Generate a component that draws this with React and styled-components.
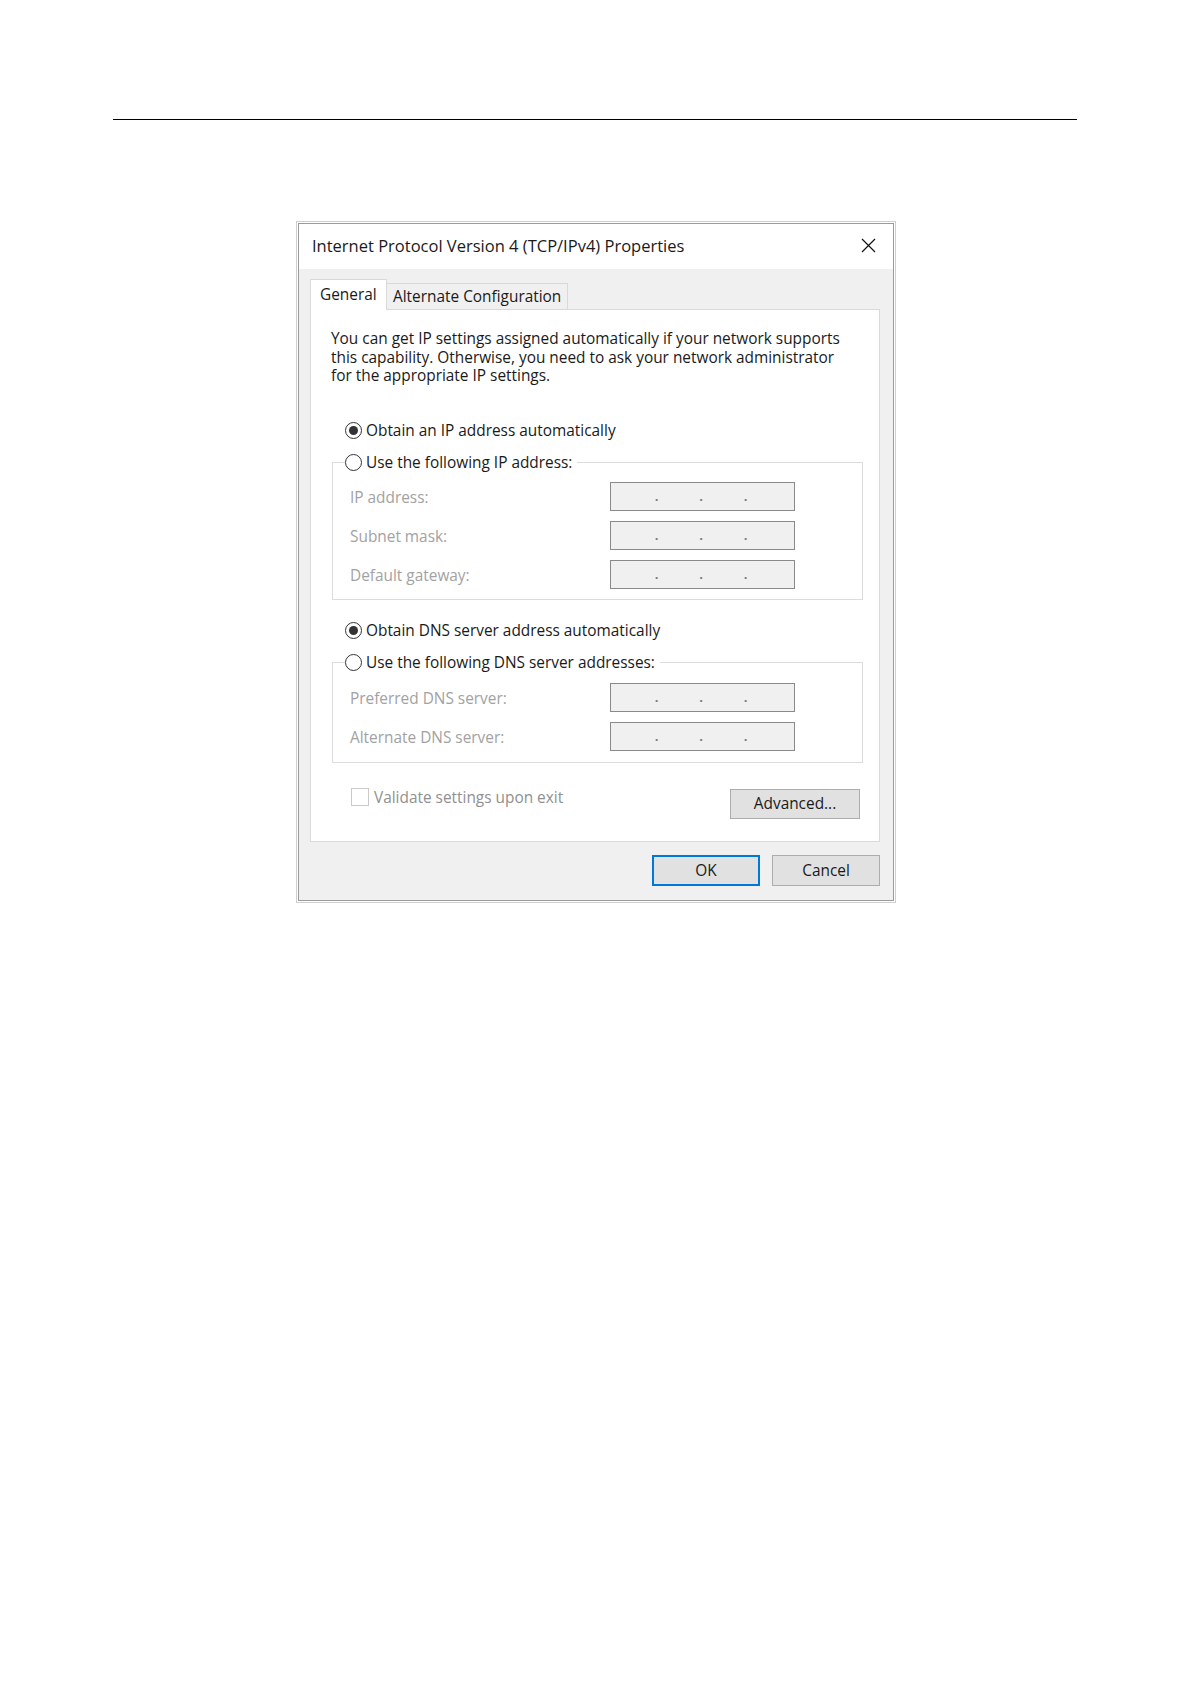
import React from "react";
import styled, { createGlobalStyle } from "styled-components";

const Global = createGlobalStyle`
    body {
        margin: 0;
        background: #fff;
        font-family: "Open Sans", "Noto Sans", sans-serif;
        font-size: 15.4px;
        color: #111;
    }
`

const Page = styled.div`
    width: 1191px;
    height: 1684px;
    padding: 119px 0 0 113px;
    box-sizing: border-box;
`

const Rule = styled.div`
    width: 964px;
    border-top: 1px solid #000;
`

const Frame = styled.div`
    margin: 101px 0 0 183px;
    width: 600px;
    height: 682px;
    box-sizing: border-box;
    border: 1px solid #cfcfcf;
    padding: 1px;
    background: #fff;
`

const Window = styled.div`
    height: 100%;
    box-sizing: border-box;
    border: 1px solid #9a9a9a;
    display: flex;
    flex-direction: column;
`

const TitleBar = styled.div`
    height: 45px;
    flex: none;
    display: flex;
    align-items: center;
    justify-content: space-between;
    padding: 0 17px 2px 13px;
    box-sizing: border-box;
    background: #fff;
    font-size: 16.5px;
    color: #1a1a1a;
`

const Close = styled.div`
    width: 15px;
    height: 15px;
    display: flex;
`

const Body = styled.div`
    flex: 1;
    background: #f0f0f0;
    padding: 10px 13px 0 11px;
    display: flex;
    flex-direction: column;
`

const TabStrip = styled.div`
    display: flex;
    align-items: flex-end;
    height: 31px;
    margin-bottom: -1px;
`

const Tab = styled.div`
    position: relative;
    z-index: ${(p) => (p.active ? 2 : 1)};
    height: ${(p) => (p.active ? "31px" : "27px")};
    box-sizing: border-box;
    border: 1px solid #d9d9d9;
    border-bottom: ${(p) => (p.active ? "none" : "1px solid #d9d9d9")};
    border-left: ${(p) => (p.active ? "1px solid #d9d9d9" : "none")};
    background: ${(p) => (p.active ? "#fff" : "#f0f0f0")};
    padding: ${(p) => (p.active ? "0 6px 2px 9px" : "0 4px 0 6px")};
    display: flex;
    align-items: center;
    white-space: nowrap;
    color: #1a1a1a;
    width: ${(p) => p.w}px;
`

const Panel = styled.div`
    height: 533px;
    box-sizing: border-box;
    border: 1px solid #d9d9d9;
    background: #fff;
    padding: 20px 16px 0 0;
    display: flex;
    flex-direction: column;
`

const Intro = styled.p`
    margin: 0 0 0 20px;
    line-height: 18.5px;
    color: #1a1a1a;
    white-space: nowrap;
`

const RadioRow = styled.label`
    display: flex;
    align-items: center;
    gap: 4px;
    height: 20px;
    margin: ${(p) => p.m || "0"};
    color: #1a1a1a;
    white-space: nowrap;
`

const Radio = styled.span`
    width: 17px;
    height: 17px;
    box-sizing: border-box;
    border: 1px solid #333;
    border-radius: 50%;
    display: flex;
    align-items: center;
    justify-content: center;
    flex: none;
    background: #fff;
    &::after {
        content: "";
        width: 9px;
        height: 9px;
        border-radius: 50%;
        background: #333;
        display: ${(p) => (p.checked ? "block" : "none")};
    }
`

const Group = styled.fieldset`
    margin: ${(p) => p.m};
    border: 1px solid #dcdcdc;
    padding: 0 0 ${(p) => p.pb}px 17px;
    display: flex;
    flex-direction: column;
    gap: 10px;
    min-width: 0;
`

const Legend = styled.legend`
    margin-left: -5px;
    padding: 0 5px 0 0;
`

const FieldRow = styled.div`
    display: flex;
    align-items: center;
    height: 29px;
    &:first-of-type {
        margin-top: ${(p) => p.first || 0}px;
    }
`

const FieldLabel = styled.span`
    width: 260px;
    color: #a2a2a2;
    padding-top: 3px;
`

const IpBox = styled.div`
    width: 185px;
    height: 29px;
    box-sizing: border-box;
    border: 1px solid #8a8a8a;
    background: #f0f0f0;
    display: flex;
    padding-left: 3px;
`

const Dot = styled.span`
    width: 44.5px;
    text-align: right;
    font-size: 13px;
    font-weight: 700;
    line-height: 26px;
    color: #7a7a7a;
`

const Footer = styled.div`
    display: flex;
    justify-content: space-between;
    align-items: flex-start;
    margin: 26px 3px 0 40px;
`

const Check = styled.label`
    display: flex;
    align-items: center;
    gap: 5px;
    color: #909090;
    margin-top: -2px;
`

const Box = styled.span`
    width: 18px;
    height: 18px;
    box-sizing: border-box;
    border: 1px solid #cacaca;
    background: #fff;
`

const Button = styled.button`
    width: ${(p) => p.w}px;
    height: ${(p) => p.h}px;
    box-sizing: border-box;
    background: #e1e1e1;
    border: ${(p) => (p.primary ? "2px solid #0078d7" : "1px solid #adadad")};
    font-family: "Open Sans", "Noto Sans", sans-serif;
    font-size: 15.4px;
    color: #1a1a1a;
    padding: 0;
`

const Actions = styled.div`
    display: flex;
    justify-content: flex-end;
    gap: 12px;
    margin-top: 13px;
`

const IpField = () => (
    <IpBox>
        <Dot>.</Dot>
        <Dot>.</Dot>
        <Dot>.</Dot>
    </IpBox>
)

const Field = ({ label, first }) => (
    <FieldRow first={first}>
        <FieldLabel>{label}</FieldLabel>
        <IpField />
    </FieldRow>
)

const App = () => {
    return (
        <>
            <Global />
            <Page>
                <Rule />
                <Frame>
                    <Window>
                        <TitleBar>
                            <span>Internet Protocol Version 4 (TCP/IPv4) Properties</span>
                            <Close>
                                <svg width="15" height="15" viewBox="0 0 15 15">
                                    <path d="M1 1 L14 14 M14 1 L1 14" stroke="#111" strokeWidth="1.2" fill="none" />
                                </svg>
                            </Close>
                        </TitleBar>
                        <Body>
                            <TabStrip>
                                <Tab active w={77}>General</Tab>
                                <Tab w={181}>Alternate Configuration</Tab>
                            </TabStrip>
                            <Panel>
                                <Intro>
                                    You can get IP settings assigned automatically if your network supports<br />
                                    this capability. Otherwise, you need to ask your network administrator<br />
                                    for the appropriate IP settings.
                                </Intro>
                                <RadioRow m="35px 0 0 34px">
                                    <Radio checked />
                                    Obtain an IP address automatically
                                </RadioRow>
                                <Group m="12px 0 0 21px" pb={10}>
                                    <Legend>
                                        <RadioRow>
                                            <Radio />
                                            Use the following IP address:
                                        </RadioRow>
                                    </Legend>
                                    <Field label="IP address:" first={9} />
                                    <Field label="Subnet mask:" />
                                    <Field label="Default gateway:" />
                                </Group>
                                <RadioRow m="21px 0 0 34px">
                                    <Radio checked />
                                    Obtain DNS server address automatically
                                </RadioRow>
                                <Group m="12px 0 0 21px" pb={11}>
                                    <Legend>
                                        <RadioRow>
                                            <Radio />
                                            Use the following DNS server addresses:
                                        </RadioRow>
                                    </Legend>
                                    <Field label="Preferred DNS server:" first={10} />
                                    <Field label="Alternate DNS server:" />
                                </Group>
                                <Footer>
                                    <Check>
                                        <Box />
                                        Validate settings upon exit
                                    </Check>
                                    <Button w={130} h={30}>Advanced...</Button>
                                </Footer>
                            </Panel>
                            <Actions>
                                <Button primary w={108} h={31}>OK</Button>
                                <Button w={108} h={31}>Cancel</Button>
                            </Actions>
                        </Body>
                    </Window>
                </Frame>
            </Page>
        </>
    )
}

export default App;
